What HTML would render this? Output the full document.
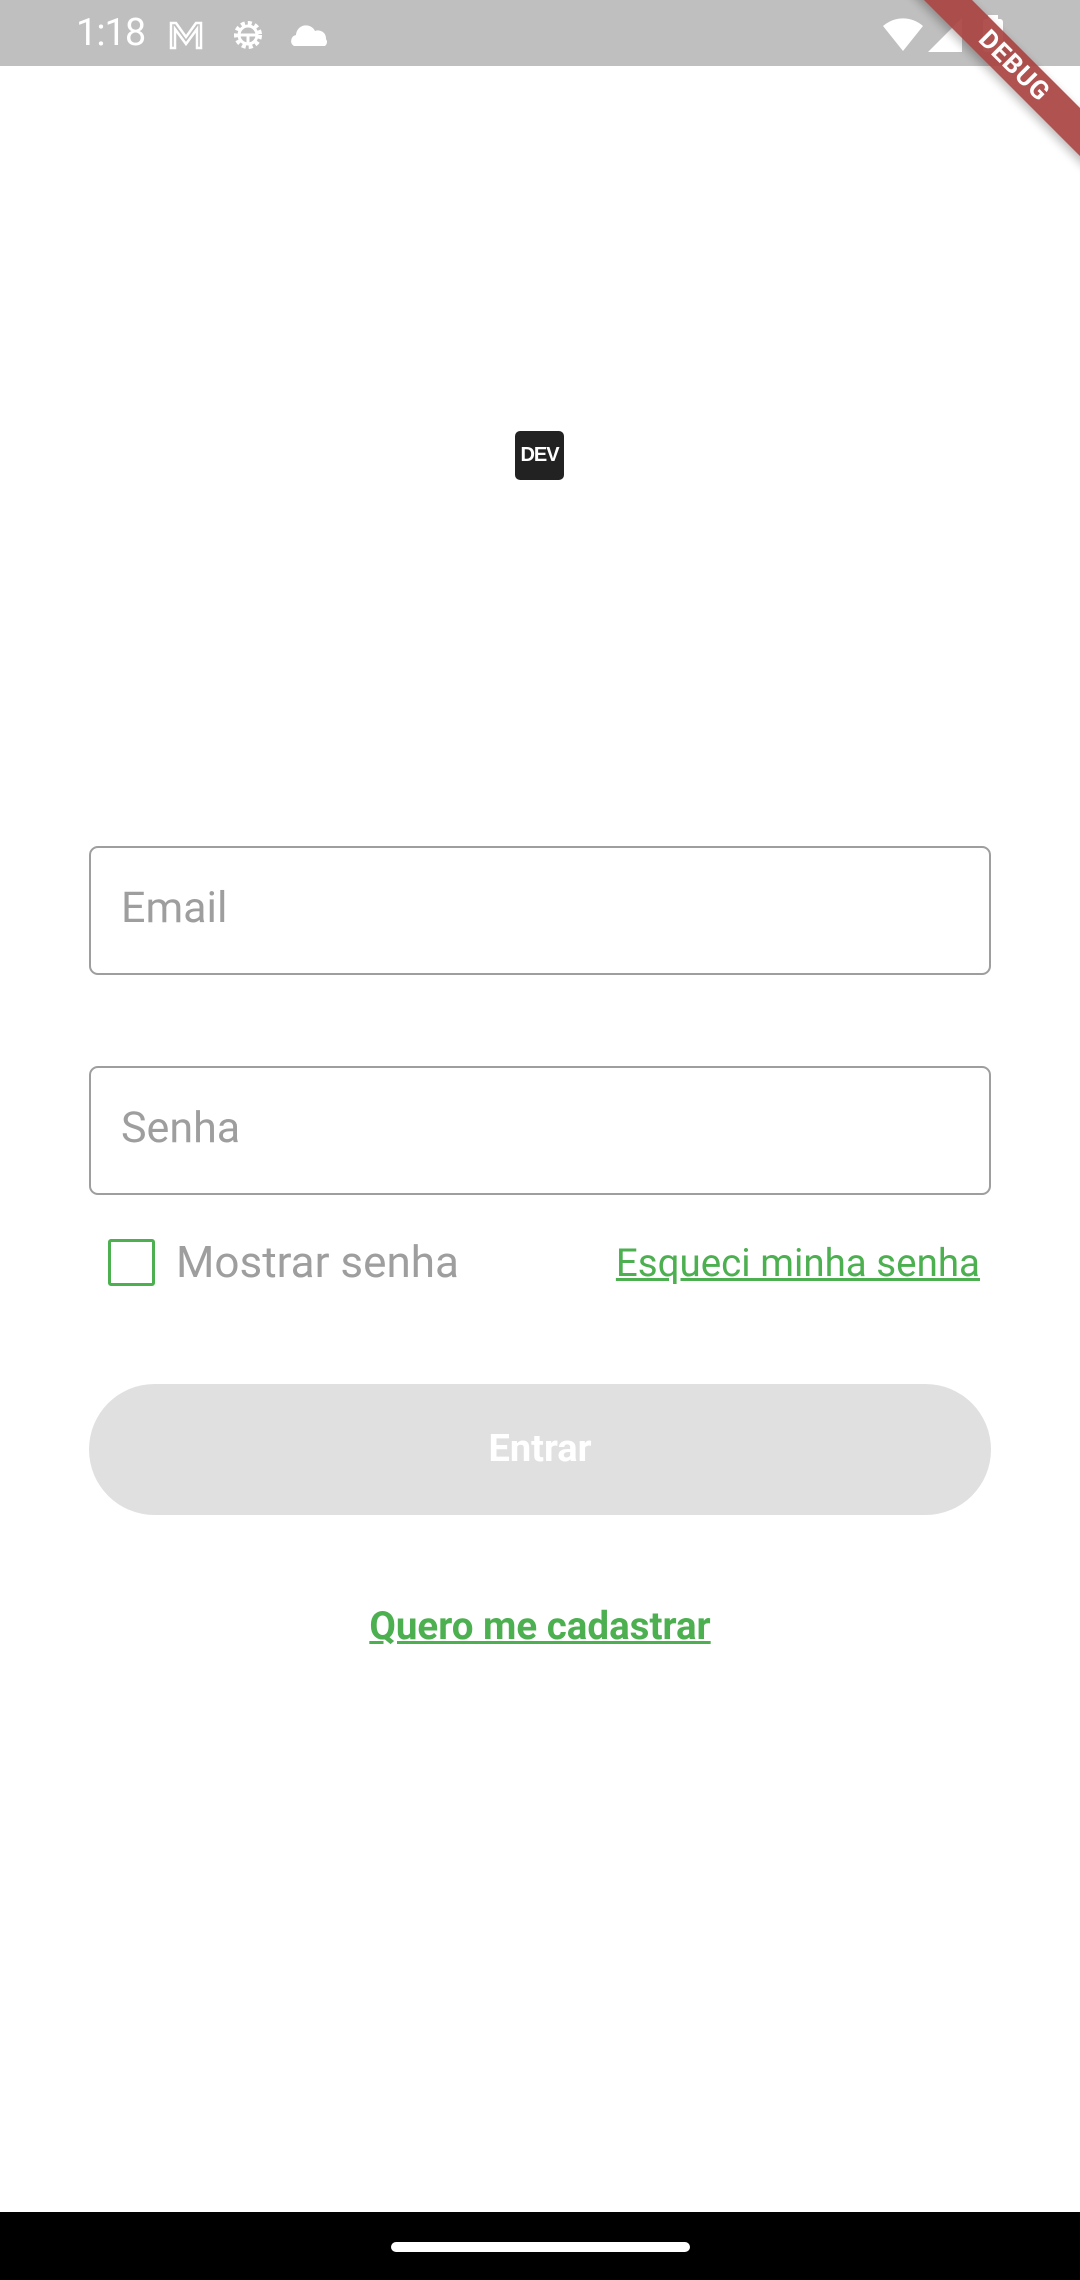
<!DOCTYPE html>
<html><head><meta charset="utf-8"><style>
*{margin:0;padding:0;box-sizing:border-box}
body{width:1080px;height:2280px;background:#fff;position:relative;overflow:hidden;font-family:"Roboto","Liberation Sans",sans-serif}
.sb{position:absolute;left:0;top:0;width:1080px;height:66px;background:#bfbfbf}
.time{position:absolute;left:76px;top:11px;color:#fff;font-size:38px;letter-spacing:-1px}
.field{position:absolute;left:89px;width:902px;height:129px;border:2.5px solid #9e9e9e;border-radius:9px}
.field span{position:absolute;left:30px;top:35px;font-size:43px;color:#9e9e9e}
.ribbon{position:absolute;left:814px;top:49px;width:400px;height:34px;background:#a94442;transform:rotate(45deg);color:#fff;font-weight:bold;font-size:26px;text-align:center;line-height:34px;box-shadow:0 4px 10px rgba(0,0,0,.3);opacity:.92;letter-spacing:1px}
</style></head><body>
<div class="sb">
<div class="time">1:18</div>
<svg style="position:absolute;left:168px;top:20px" width="36" height="30" viewBox="0 0 36 30"><path d="M3 28V3h5l10 14L28 3h5v25h-4V9L18 24 7 9v19z" fill="none" stroke="#fff" stroke-width="2.5"/></svg>
<svg style="position:absolute;left:230px;top:16px" width="36" height="38" viewBox="0 0 36 38"><circle cx="18" cy="19" r="12" fill="none" stroke="#fff" stroke-width="4" stroke-dasharray="4 3"/><circle cx="18" cy="19" r="9" fill="none" stroke="#fff" stroke-width="3"/><path d="M9 19h18M18 19v10" stroke="#fff" stroke-width="3"/></svg>
<svg style="position:absolute;left:290px;top:22px" width="40" height="24" viewBox="0 0 40 24"><path d="M4 24a6 6 0 0 1 2-11 10 10 0 0 1 19-4 8 8 0 0 1 11 8 5 5 0 0 1-1 7z" fill="#fff"/></svg>
<svg style="position:absolute;left:882px;top:16px" width="42" height="36" viewBox="0 0 42 36"><path d="M21 35L1 10a30 30 0 0 1 40 0z" fill="#fff"/></svg>
<svg style="position:absolute;left:928px;top:17px" width="36" height="36" viewBox="0 0 36 36"><path d="M0 35L34 1v34z" fill="#fff"/></svg>
<div style="position:absolute;left:983px;top:19px;width:20px;height:33px;background:#fff;border-radius:3px"></div>
<div style="position:absolute;left:988px;top:15px;width:10px;height:5px;background:#fff"></div>
</div>
<div style="position:absolute;left:515px;top:431px;width:49px;height:49px;background:#222;border-radius:5px;color:#fff;font-weight:bold;font-size:20px;line-height:49px;text-align:center;font-family:'Liberation Sans',sans-serif;letter-spacing:-1px">DEV</div>
<div class="field" style="top:846px"><span>Email</span></div>
<div class="field" style="top:1066px"><span>Senha</span></div>
<div style="position:absolute;left:108px;top:1239px;width:47px;height:47px;border:3px solid #4caf50;border-radius:3px"></div>
<div style="position:absolute;left:176px;top:1236px;font-size:44px;color:#9e9e9e">Mostrar senha</div>
<div style="position:absolute;right:100px;top:1241px;font-size:38.5px;color:#4caf50;text-decoration:underline">Esqueci minha senha</div>
<div style="position:absolute;left:89px;top:1384px;width:902px;height:131px;border-radius:66px;background:#e0e0e0;color:#fff;font-weight:bold;font-size:38px;text-align:center;line-height:131px">Entrar</div>
<div style="position:absolute;left:0;width:1080px;top:1604px;text-align:center;font-weight:bold;font-size:38.5px;color:#4caf50;text-decoration:underline">Quero me cadastrar</div>
<div style="position:absolute;left:0;top:2212px;width:1080px;height:68px;background:#000"></div>
<div style="position:absolute;left:391px;top:2242px;width:299px;height:10px;background:#fff;border-radius:5px"></div>
<div class="ribbon">DEBUG</div>
</body></html>
